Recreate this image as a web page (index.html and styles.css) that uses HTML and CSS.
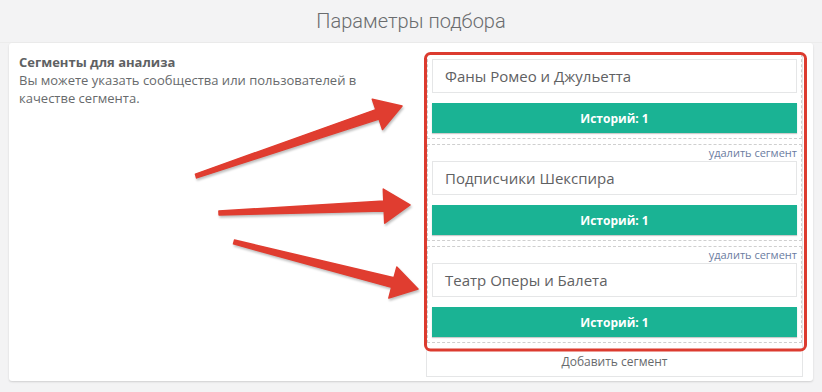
FILE: index.html
```html
<!DOCTYPE html>
<html lang="ru">
<head>
    <meta charset="UTF-8">
    <meta name="viewport" content="width=device-width, initial-scale=1.0">
    <title>Параметры подбора</title>
    <link rel="stylesheet" href="styles.css">
</head>
<body>
    <header class="page-title">Параметры подбора</header>

    <div class="card">
        <div class="card-info">
            <div class="card-label">Сегменты для анализа</div>
            <div class="card-hint">Вы можете указать сообщества или пользователей в качестве сегмента.</div>
        </div>

        <div class="segments">
            <div class="segment segment-first">
                <div class="segment-input">Фаны Ромео и Джульетта</div>
                <button class="segment-btn">Историй: 1</button>
            </div>
            <div class="segment">
                <a class="segment-remove" href="#">удалить сегмент</a>
                <div class="segment-input">Подписчики Шекспира</div>
                <button class="segment-btn">Историй: 1</button>
            </div>
            <div class="segment">
                <a class="segment-remove" href="#">удалить сегмент</a>
                <div class="segment-input">Театр Оперы и Балета</div>
                <button class="segment-btn">Историй: 1</button>
            </div>
            <div class="segment-add">Добавить сегмент</div>
        </div>
    </div>

    <!-- annotation layer: arrows + highlight frame -->
    <svg class="annotations" width="822" height="392" viewBox="0 0 822 392">
        <rect x="425.5" y="53.5" width="380" height="296.5" rx="5" ry="5" fill="none" stroke="#dc3b2f" stroke-width="3"/>
        <g class="arrows" fill="#e03d30" stroke="#e03d30" stroke-width="1.5" stroke-linejoin="round">
            <polygon points="195.4,174.1 375.8,109.6 372.3,99.2 402,106 382.5,129.5 379,119.1 196.6,177.9"/>
            <polygon points="218.9,211 383.8,201.1 383.3,189.1 410,205 384.7,223.1 384.2,211.1 219.1,215"/>
            <polygon points="234.5,240.1 394,277.7 396.8,267.1 418,289 388.8,298.1 391.6,287.4 233.5,243.9"/>
        </g>
    </svg>
</body>
</html>
```

FILE: styles.css
```css
body {
    margin: 0;
    background-color: #f3f3f4;
    font-family: "Open Sans", "Liberation Sans", sans-serif;
    color: #676a6c;
    position: relative;
    width: 822px;
    height: 392px;
    overflow: hidden;
}

.page-title {
    height: 42px;
    line-height: 42px;
    text-align: center;
    font-family: Roboto, "Open Sans", sans-serif;
    font-weight: 300;
    font-size: 20px;
    color: #6a6c6e;
    border-bottom: 1px solid #ececec;
}

.card {
    margin: 0 9px;
    background: white;
    border-radius: 3px;
    box-shadow: 0 1px 2px rgba(0, 0, 0, 0.15);
    padding: 10px 10px 4px;
    display: grid;
    grid-template-columns: 1fr 377px;
}

.card-info {
    padding-right: 40px;
    font-size: 13px;
    line-height: 18px;
}

.card-label {
    font-weight: 700;
    color: #5e6163;
}

/* right column */
.segments {
    border: 1px solid #e5e6e7;
}

.segment {
    border: 1px dashed #cfcfcf;
    padding: 0 4px 5px;
    margin-bottom: 5px;
}

.segment-first {
    padding-top: 4px;
}

.segment-remove {
    display: block;
    height: 16px;
    line-height: 16px;
    text-align: right;
    font-size: 11px;
    color: #6b7c9f;
    text-decoration: none;
}

.segment-input {
    height: 32px;
    line-height: 32px;
    border: 1px solid #e5e6e7;
    padding: 0 12px;
    font-size: 15px;
    color: #5f6163;
}

.segment-btn {
    display: block;
    width: 100%;
    height: 30px;
    margin-top: 10px;
    background-color: #1ab394;
    color: white;
    border: none;
    border-radius: 0;
    box-shadow: 0 1px 1px rgba(0, 0, 0, 0.2);
    font-family: "Open Sans", "Liberation Sans", sans-serif;
    font-weight: 700;
    font-size: 12px;
}

.segment-add {
    height: 28px;
    line-height: 28px;
    text-align: center;
    font-size: 12px;
    color: #676a6c;
}

.annotations {
    position: absolute;
    top: 0;
    left: 0;
    pointer-events: none;
}

.arrows {
    filter: drop-shadow(1px 2px 1px rgba(0, 0, 0, 0.25));
}
```
